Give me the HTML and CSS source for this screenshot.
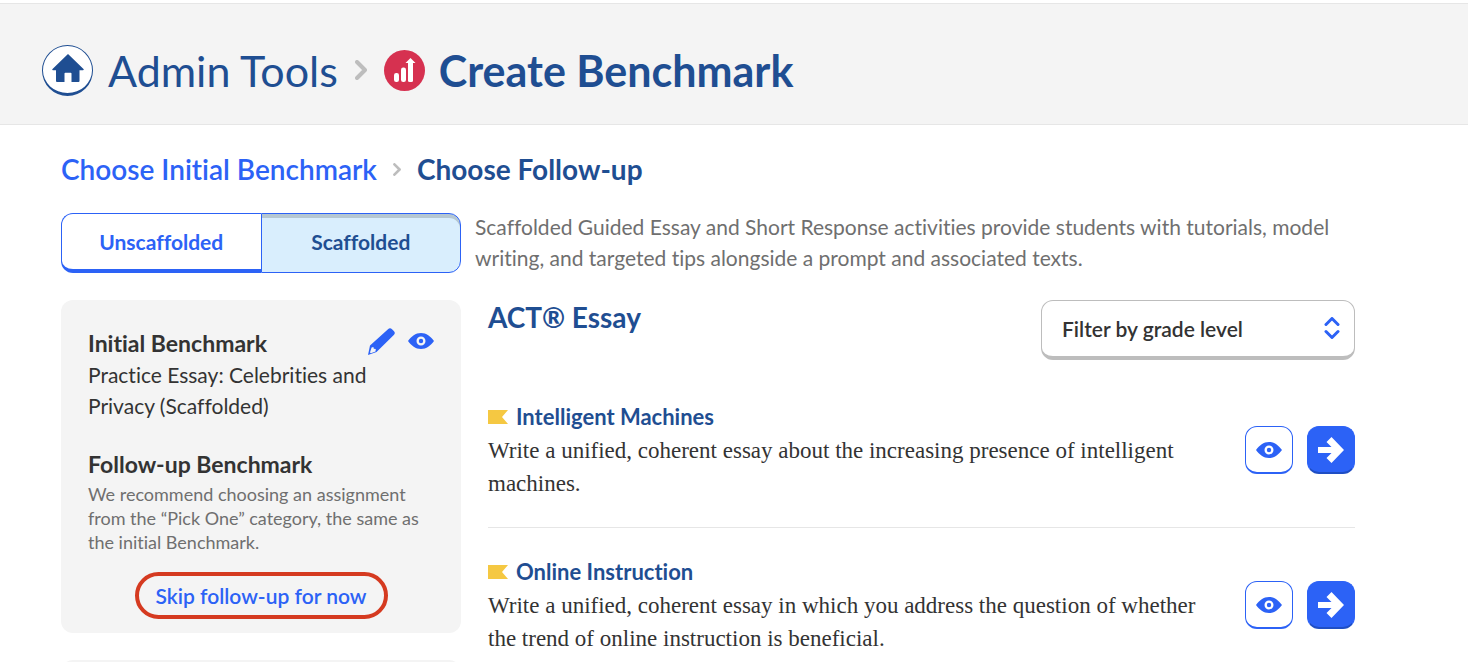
FILE: index.html
```html
<!DOCTYPE html>
<html lang="en">
<head>
    <title>Create Benchmark</title>
    <meta charset="UTF-8">
    <meta name="viewport" content="width=device-width, initial-scale=1">
    <link rel="stylesheet" href="styles.css">
</head>

<body>
    <!-- shared icons -->
    <svg class="sprite" aria-hidden="true">
        <symbol id="eye" viewBox="0 0 26 16">
            <path fill-rule="evenodd" d="M0 8C3.500 3.500 7.500 0 13 0s9.500 3.500 13 8c-3.500 4.500-7.500 8-13 8S3.500 12.500 0 8zM13 3.500a4.500 4.500 0 1 0 0 9a4.500 4.500 0 1 0 0-9z"/>
            <circle cx="13" cy="8" r="2.200"/>
        </symbol>
        <symbol id="arrow" viewBox="0 0 26 26">
            <path d="M0 10h13.500L8.500 5 13.500 0 26 13 13.500 26 8.500 21l5-5H0z"/>
        </symbol>
        <symbol id="flag" viewBox="0 0 20 14">
            <path d="M0 0h20l-6 7 6 7H0z"/>
        </symbol>
        <symbol id="chevron" viewBox="0 0 12 20">
            <path d="M2 2l8 8-8 8" fill="none" stroke="#bdbdbd" stroke-width="4" stroke-linecap="round" stroke-linejoin="round"/>
        </symbol>
    </svg>

    <header class="header">
        <a class="home" href="#" aria-label="Home">
            <svg width="32" height="28" viewBox="0 0 32 28">
                <path d="M16 0l15.500 15q.8 1.200-.6 1.200H27.500V27q0 1-1 1H19.500v-8.500q0-.8-.8-.8h-5.400q-.8 0-.8.800V28H5q-1 0-1-1V16.200H1q-1.300 0-.5-1.200z"/>
            </svg>
        </a>
        <a class="header-link" href="#">Admin Tools</a>
        <svg class="chevron" width="12" height="20"><use href="#chevron"/></svg>
        <svg class="badge" width="41" height="41" viewBox="0 0 41 41">
            <circle cx="20.500" cy="20.500" r="20.500" fill="#d63150"/>
            <g fill="#fff">
                <rect x="10" y="23" width="5" height="9" rx="2.200"/>
                <rect x="17" y="17.500" width="5" height="14.500" rx="2.200"/>
                <rect x="24" y="11" width="5" height="21" rx="1.500"/>
                <path d="M26.500 8l5 5h-10z"/>
            </g>
        </svg>
        <h1 class="header-title">Create Benchmark</h1>
    </header>

    <main class="main">
        <nav class="crumbs">
            <a href="#">Choose Initial Benchmark</a>
            <svg class="chevron" width="8" height="13"><use href="#chevron"/></svg>
            <span class="current">Choose Follow-up</span>
        </nav>

        <div class="intro">
            <div class="toggle">
                <button type="button" class="tab">Unscaffolded</button>
                <button type="button" class="tab tab-active">Scaffolded</button>
            </div>
            <p>Scaffolded Guided Essay and Short Response activities provide students with tutorials, model writing, and targeted tips alongside a prompt and associated texts.</p>
        </div>

        <div class="columns">
            <aside class="sidebar">
                <section class="panel">
                    <div class="panel-head">
                        <h3>Initial Benchmark</h3>
                        <button type="button" class="icon" aria-label="Edit">
                            <svg width="27" height="27" viewBox="0 0 27 27">
                                <path fill-rule="evenodd" d="M20 1.200q2-2 4 0l1.800 1.800q2 2 0 4L8.500 24 0 27l2-9.500zM3.600 19.500L2 24.500l.8.700 4.700-1.800.3-2.400-2-.3-.4-1.700z"/>
                            </svg>
                        </button>
                        <button type="button" class="icon" aria-label="Preview">
                            <svg width="26" height="16"><use href="#eye"/></svg>
                        </button>
                    </div>
                    <p class="chosen">Practice Essay: Celebrities and Privacy (Scaffolded)</p>
                    <h3>Follow-up Benchmark</h3>
                    <p class="hint">We recommend choosing an assignment from the “Pick One” category, the same as the initial Benchmark.</p>
                    <button type="button" class="skip">Skip follow-up for now</button>
                </section>
                <section class="panel"></section>
            </aside>

            <div class="list">
                <div class="list-head">
                    <h2>ACT® Essay</h2>
                    <div class="filter">
                        <select aria-label="Filter by grade level">
                            <option>Filter by grade level</option>
                        </select>
                        <svg width="16" height="22" viewBox="0 0 16 22">
                            <path d="M2 7.500l6-6 6 6M2 14.500l6 6 6-6" fill="none" stroke="#2c62f6" stroke-width="3" stroke-linecap="round" stroke-linejoin="round"/>
                        </svg>
                    </div>
                </div>

                <article class="item">
                    <div class="item-text">
                        <h3><svg width="20" height="14"><use href="#flag"/></svg>Intelligent Machines</h3>
                        <p>Write a unified, coherent essay about the increasing presence of intelligent machines.</p>
                    </div>
                    <button type="button" class="btn" aria-label="Preview"><svg width="26" height="16"><use href="#eye"/></svg></button>
                    <button type="button" class="btn btn-go" aria-label="Choose"><svg width="26" height="26"><use href="#arrow"/></svg></button>
                </article>

                <article class="item">
                    <div class="item-text">
                        <h3><svg width="20" height="14"><use href="#flag"/></svg>Online Instruction</h3>
                        <p>Write a unified, coherent essay in which you address the question of whether the trend of online instruction is beneficial.</p>
                    </div>
                    <button type="button" class="btn" aria-label="Preview"><svg width="26" height="16"><use href="#eye"/></svg></button>
                    <button type="button" class="btn btn-go" aria-label="Choose"><svg width="26" height="26"><use href="#arrow"/></svg></button>
                </article>
            </div>
        </div>
    </main>
</body>
</html>
```
FILE: styles.css
```css
* {
    box-sizing: border-box;
}

body {
    margin: 0;
    height: 100vh;
    overflow: hidden;
    padding-top: 3px;
    background: #fff;
    color: #333;
    font-family: Lato, "Open Sans", sans-serif;
    font-size: 21px;
    font-variant-ligatures: none;
}

h1, h2, h3, p {
    margin: 0;
}

a {
    text-decoration: none;
}

button, select {
    font-family: inherit;
    font-variant-ligatures: none;
    cursor: pointer;
}

svg {
    flex: none;
}

.sprite {
    display: none;
}

/* top bar */
.header {
    display: flex;
    align-items: center;
    height: 122px;
    padding: 12px 42px 0;
    background: #f4f4f4;
    border-top: 1px solid #e6e6e6;
    border-bottom: 1px solid #e6e6e6;
    color: #1f4e92;
    font-size: 43px;
}

.home {
    display: flex;
    align-items: center;
    justify-content: center;
    width: 51px;
    height: 51px;
    padding-bottom: 2px;
    background: #fff;
    border: 1px solid #1f4e92;
    border-bottom-width: 3px;
    border-radius: 50%;
    fill: #1f4e92;
}

.header-link {
    margin-left: 15px;
    color: #1f4e92;
}

.header .chevron {
    margin: 0 17px;
}

.header-title {
    margin-left: 14px;
    font-size: 43px;
}

/* page body */
.main {
    padding: 24px 113px 0 61px;
}

.crumbs {
    display: flex;
    align-items: center;
    line-height: 40px;
    font-size: 28px;
    font-weight: 600;
}

.crumbs a {
    color: #2c62f6;
}

.crumbs .chevron {
    margin: 0 16px;
}

.current {
    color: #1f4e92;
    font-weight: 700;
}

.intro {
    display: flex;
    gap: 14px;
    margin-top: 24px;
    color: #6f6f6f;
    line-height: 31px;
}

.intro p {
    flex: 1;
    margin-top: -2px;
}

.toggle {
    display: flex;
    width: 400px;
    height: 60px;
}

.tab {
    flex: 1;
    background: #fff;
    border: 1px solid #2c62f6;
    border-bottom-width: 4px;
    border-right: 0;
    border-radius: 12px 0 0 12px;
    color: #2c62f6;
    font-size: 21px;
    font-weight: 700;
}

.tab-active {
    padding-bottom: 4px;
    background: #d9eefd;
    border: 1px solid #2c62f6;
    border-radius: 0 12px 12px 0;
    box-shadow: inset 0 4px #b5c7d2;
    color: #1f4e92;
}

.columns {
    display: flex;
    gap: 27px;
    margin-top: 27px;
}

/* left column */
.sidebar {
    width: 400px;
    flex: none;
}

.panel {
    min-height: 120px;
    margin-bottom: 27px;
    padding: 27px;
    padding-bottom: 14px;
    background: #f4f4f4;
    border-radius: 12px;
}

.panel h3 {
    font-size: 23px;
    line-height: 32px;
}

.panel-head {
    display: flex;
    align-items: center;
    gap: 13px;
}

.panel-head h3 {
    flex: 1;
}

.icon {
    display: flex;
    padding: 0 0 4px;
    background: none;
    border: 0;
    fill: #2c62f6;
}

.chosen {
    margin-bottom: 27px;
    line-height: 31px;
}

.hint {
    margin-top: 2px;
    color: #6f6f6f;
    font-size: 18px;
    line-height: 24px;
}

.skip {
    display: block;
    height: 47px;
    margin: 18px auto 0;
    padding: 0 17px;
    background: none;
    border: 4px solid #d53a20;
    border-radius: 24px;
    color: #2c62f6;
    font-size: 21px;
    font-weight: 600;
}

/* assignment list */
.list {
    flex: 1;
}

.list-head {
    display: flex;
    justify-content: space-between;
}

.list-head h2 {
    color: #1f4e92;
    font-size: 28px;
    line-height: 34px;
}

.filter {
    display: flex;
    align-items: center;
    position: relative;
    width: 314px;
    height: 60px;
}

.filter select {
    width: 100%;
    height: 100%;
    padding: 0 20px;
    appearance: none;
    background: #fff;
    border: 1px solid #bdbdbd;
    border-bottom-width: 4px;
    border-radius: 12px;
    color: #333;
    font-size: 21px;
    font-weight: 600;
}

.filter svg {
    position: absolute;
    top: 17px;
    right: 15px;
    pointer-events: none;
}

.item {
    display: flex;
    align-items: center;
    gap: 14px;
    padding: 27px 0;
    border-bottom: 1px solid #e6e6e6;
}

.list-head + .item {
    margin-top: 13px;
}

.item-text {
    flex: 1;
    padding-right: 20px;
}

.item h3 {
    display: flex;
    align-items: center;
    gap: 8px;
    color: #1f4e92;
    font-size: 22px;
    line-height: 34px;
}

.item h3 svg {
    fill: #f5c842;
}

.item p {
    font-family: Georgia, "Liberation Serif", serif;
    font-size: 23px;
    line-height: 33px;
}

.btn {
    display: flex;
    align-items: center;
    justify-content: center;
    width: 48px;
    height: 48px;
    padding: 0;
    background: #fff;
    border: 1px solid #2c62f6;
    border-bottom-width: 2px;
    border-radius: 12px;
    fill: #2c62f6;
}

.btn-go {
    background: #2c62f6;
    border-bottom-color: #1f4ec4;
    fill: #fff;
}
```
